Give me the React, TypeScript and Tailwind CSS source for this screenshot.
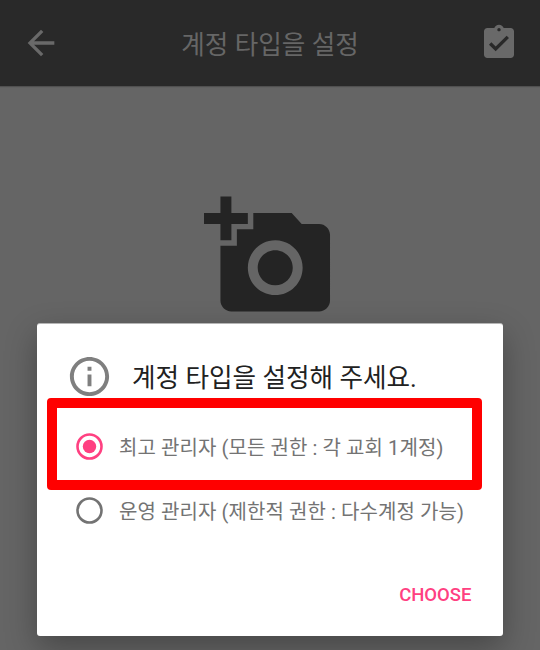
const options = [
  { label: "최고 관리자 (모든 권한 : 각 교회 1계정)", selected: true },
  { label: "운영 관리자 (제한적 권한 : 다수계정 가능)", selected: false },
];

function Option({ label, selected }: { label: string; selected: boolean }) {
  return (
    <label className="flex items-center gap-[16px]">
      <svg className={selected ? "size-[27px] shrink-0 text-[#ff4081]" : "size-[27px] shrink-0 text-[#737373]"} viewBox="0 0 27 27">
        <circle cx="13.5" cy="13.5" r="12" fill="none" stroke="currentColor" strokeWidth="2.6" />
        {selected && <circle cx="13.5" cy="13.5" r="6.7" fill="currentColor" />}
      </svg>
      <span className="whitespace-nowrap pt-[2px] text-[20px] leading-none tracking-[0.09px] text-[#737373]">{label}</span>
    </label>
  );
}

export default function App() {
  return (
    <div className="h-[650px] w-[540px] overflow-hidden bg-[#656565] font-['Roboto','Noto_Sans_CJK_KR',sans-serif]">
      <header className="flex h-[86px] items-center justify-between bg-[#292929] px-[21px] text-[#696969] shadow-[0_1px_1px_#505050]">
        <svg className="size-[40px]" viewBox="0 0 24 24" fill="currentColor"><path d="M20 11H7.83l5.59-5.59L12 4l-8 8 8 8 1.41-1.41L7.83 13H20v-2z" /></svg>
        <h1 className="pt-[5px] text-[25.6px] leading-none text-[#666666]">계정 타입을 설정</h1>
        <svg className="size-[40px]" viewBox="0 0 24 24" fill="currentColor"><path d="M19 3h-4.18C14.4 1.84 13.3 1 12 1s-2.4.84-2.82 2H5c-1.1 0-2 .9-2 2v14c0 1.1.9 2 2 2h14c1.1 0 2-.9 2-2V5c0-1.1-.9-2-2-2zm-7 0c.55 0 1 .45 1 1s-.45 1-1 1-1-.45-1-1 .45-1 1-1zm-2 14l-4-4 1.41-1.41L10 14.17l6.59-6.59L18 9l-8 8z" /></svg>
      </header>
      <div className="flex h-[237px] justify-center pt-[105px]">
        <svg className="size-[131.5px] text-[#242424]" viewBox="0 0 24 24" fill="currentColor"><path d="M3 4V1h2v3h3v2H5v3H3V6H0V4h3zm3 6V7h3V4h7l1.83 2H21c1.1 0 2 .9 2 2v12c0 1.1-.9 2-2 2H5c-1.1 0-2-.9-2-2V10h3zm7 9c2.76 0 5-2.24 5-5s-2.24-5-5-5-5 2.24-5 5 2.24 5 5 5zm-3.2-5c0 1.77 1.43 3.2 3.2 3.2s3.2-1.43 3.2-3.2-1.43-3.2-3.2-3.2-3.2 1.43-3.2 3.2z" /></svg>
      </div>
      <section className="ml-[37px] flex h-[313px] w-[466px] flex-col rounded-[3px] border-t border-[#b5b5b5] bg-white pt-[30px] shadow-[0_12px_32px_rgba(0,0,0,0.3)]">
        <div className="ml-[29px] flex h-[44px] shrink-0 items-center gap-[19px]">
          <svg className="size-[47px] shrink-0 text-[#7f7f7f]" viewBox="0 0 24 24" fill="currentColor"><path d="M11 7h2v2h-2zm0 4h2v6h-2zm1-9C6.48 2 2 6.48 2 12s4.48 10 10 10 10-4.48 10-10S17.52 2 12 2zm0 18c-4.41 0-8-3.59-8-8s3.59-8 8-8 8 3.59 8 8-3.59 8-8 8z" /></svg>
          <h2 className="pt-[5px] text-[25.6px] leading-none text-[#212121]">계정 타입을 설정해 주세요.</h2>
        </div>
        <div className="ml-[10px] flex h-[92px] w-[434.5px] shrink-0 items-center rounded-[4px] border-[10px] border-[#f00] pl-[19px] pt-[5px]">
          <Option {...options[0]} />
        </div>
        <div className="ml-[39px] mt-[7px]"><Option {...options[1]} /></div>
        <button className="mr-[31.5px] mt-[61px] self-end text-[18.5px] font-medium leading-[20px] text-[#ff4081]">CHOOSE</button>
      </section>
    </div>
  );
}
